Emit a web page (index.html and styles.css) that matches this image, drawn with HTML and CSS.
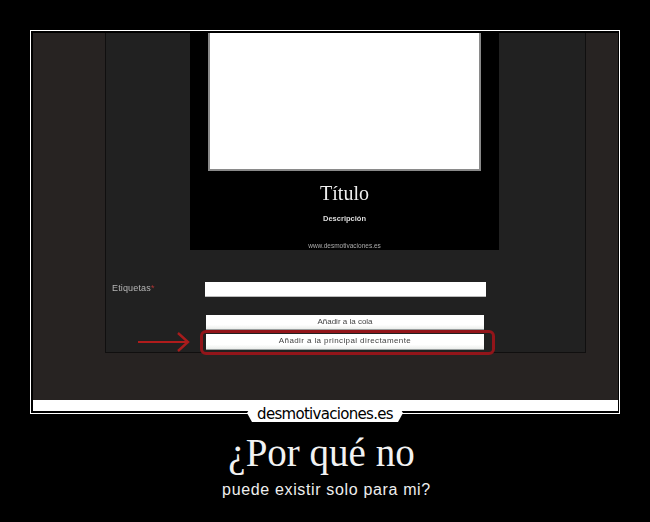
FILE: index.html
```html
<!DOCTYPE html>
<html lang="en">

<head>
  <meta charset="UTF-8">
  <meta name="viewport" content="width=device-width, initial-scale=1.0">
  <title>¿Por qué no</title>
  <link rel="stylesheet" href="styles.css">
</head>

<body>
  <div class="frame">
    <div class="shot">
      <div class="panel">
        <div class="card">
          <div class="card-image"></div>
          <div class="card-title">Título</div>
          <div class="card-desc">Descripción</div>
          <div class="card-url">www.desmotivaciones.es</div>
        </div>
        <div class="tags-row">
          <span class="tags-label">Etiquetas<span class="req">*</span></span>
          <div class="tags-input"></div>
        </div>
        <div class="btn btn-queue">Añadir a la cola</div>
        <div class="btn btn-main">Añadir a la principal directamente</div>
        <div class="highlight"></div>
        <svg class="arrow" width="52" height="22" viewBox="0 0 52 22">
          <path d="M0 11H49" stroke="#b01c1c" stroke-width="2" fill="none" />
          <path d="M40 2L50 11L40 20" stroke="#a81c1c" stroke-width="2.4" fill="none" />
        </svg>
      </div>
    </div>
    <div class="strip"></div>
    <div class="logo">desmotivaciones.es</div>
  </div>
  <h1 class="caption-title">¿Por qué no</h1>
  <p class="caption-sub">puede existir solo para mi?</p>
</body>

</html>
```

FILE: styles.css
```css
body {
  margin: 0;
  background-color: #000;
  color: #fff;
  font-family: "Liberation Sans", Arial, sans-serif;
}

.frame {
  position: relative;
  box-sizing: border-box;
  width: 590px;
  height: 384px;
  margin: 30px 0 0 30px;
  padding: 2px 1px 0 2px;
  border: 1px solid #fff;
}

.shot {
  box-sizing: border-box;
  height: 367px;
  padding: 0 32px 0 72px;
  background-color: #272322;
  overflow: hidden;
}

.panel {
  position: relative;
  box-sizing: border-box;
  height: 320px;
  background-color: #212121;
  border: 1px solid #100f0f;
  border-top: none;
  filter: blur(0.4px); /* the source picture is a soft jpeg */
}

.card {
  box-sizing: border-box;
  width: 309px;
  height: 217px;
  margin-left: 84px;
  padding-left: 18px;
  background-color: #000;
}

.card-image {
  box-sizing: border-box;
  width: 273px;
  height: 138px;
  background-color: #fff;
  border: 2px solid #8a8a8a;
  border-top: none;
}

.card-title {
  width: 273px;
  margin-top: 9px;
  font-family: "Liberation Serif", serif;
  font-size: 20px;
  line-height: 26px;
  color: #eee;
  text-align: center;
}

.card-desc {
  width: 273px;
  margin-top: 7px;
  font-size: 7.5px;
  line-height: 12px;
  font-weight: bold;
  color: #ddd;
  text-align: center;
}

.card-url {
  width: 273px;
  margin-top: 17px;
  font-size: 6.5px;
  line-height: 8px;
  color: #aaa;
  text-align: center;
}

.tags-row {
  display: flex;
  align-items: center;
  margin-top: 32px;
}

.tags-label {
  width: 93px;
  padding-left: 6px;
  padding-bottom: 3px;
  font-size: 9px;
  letter-spacing: 0.15px;
  color: #b5b5b5;
}

.req {
  color: #a33;
}

.tags-input {
  width: 281px;
  height: 15px;
  background-color: #fff;
  border-bottom: 1px solid #bbb;
  box-sizing: border-box;
}

.btn {
  box-sizing: border-box;
  width: 278px;
  margin-left: 100px;
  background: linear-gradient(#fff 70%, #eceeec);
  border-bottom: 1px solid #9a9f9f;
  font-size: 8px;
  color: #444;
  text-align: center;
}

.btn-queue {
  height: 15px;
  margin-top: 18px;
  line-height: 14px;
}

.btn-main {
  height: 16px;
  margin-top: 4px;
  line-height: 14px;
  letter-spacing: 0.4px;
}

.highlight {
  position: absolute;
  left: 94px;
  top: 297px;
  box-sizing: border-box;
  width: 295px;
  height: 25px;
  border: 3px solid #92151a;
  border-radius: 6px;
}

.arrow {
  position: absolute;
  left: 32px;
  top: 298px;
}

.strip {
  height: 11px;
  background-color: #fff;
}

.logo {
  position: absolute;
  left: 216px;
  top: 376px;
  width: 156px;
  height: 15px;
  background-color: #fff;
  clip-path: polygon(4px 0, 152px 0, 156px 6px, 151px 100%, 5px 100%, 0 6px);
  font-family: "DejaVu Sans", sans-serif;
  font-size: 15px;
  line-height: 15px;
  letter-spacing: -0.7px;
  color: #000;
  text-align: center;
}

.caption-title {
  margin: 17px 0 0;
  padding-right: 7px;
  font-family: "Liberation Serif", serif;
  font-size: 39px;
  line-height: 44px;
  font-weight: normal;
  color: #f2f2f2;
  text-align: center;
}

.caption-sub {
  margin: 5px 0 0;
  padding-left: 3px;
  font-size: 16px;
  line-height: 20px;
  letter-spacing: 0.65px;
  color: #eee;
  text-align: center;
}
```
